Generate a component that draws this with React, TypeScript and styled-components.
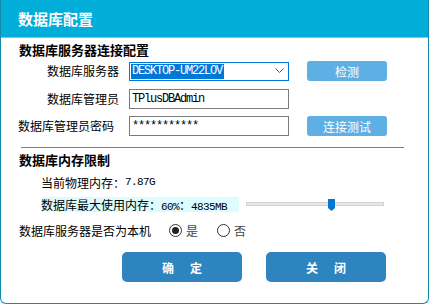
import React from 'react';
import styled, { createGlobalStyle } from 'styled-components';

const GlobalStyle = createGlobalStyle`
  body {
    margin: 0;
    background: #ffffff;
    font-family: 'Noto Sans CJK SC', 'Noto Sans', sans-serif;
  }
`;

const Window = styled.div`
  box-sizing: border-box;
  width: 429px;
  height: 304px;
  border: 1px solid #1389ab;
  border-top: none;
  border-radius: 0 0 6px 6px;
  overflow: hidden;
  background: #ffffff;
`;

const TitleBar = styled.div`
  height: 38px;
  background: #01aed9;
  border-bottom: 1px solid #74cce5;
  box-sizing: border-box;
  display: flex;
  align-items: center;
  padding-left: 17px;
  color: #ffffff;
  font-size: 15px;
  font-weight: bold;
`;

const Body = styled.div`
  display: flex;
  flex-direction: column;
`;

const SectionTitle = styled.div<{ $top: number }>`
  margin-top: ${(p) => p.$top}px;
  padding-left: 18px;
  height: 16px;
  line-height: 16px;
  font-size: 13px;
  font-weight: bold;
  color: #000;
`;

const FormGrid = styled.div`
  margin-top: 3px;
  padding-left: 17px;
  display: grid;
  grid-template-columns: 101px 160px 80px;
  grid-auto-rows: 20px;
  column-gap: 10px;
  row-gap: 7.5px;
  align-items: center;

  & > :nth-child(3n) {
    margin-left: 8px;
  }
`;

const FieldLabel = styled.div<{ $pad?: number }>`
  text-align: right;
  padding-right: ${(p) => p.$pad ?? 0}px;
  font-size: 12px;
  line-height: 20px;
  color: #000;
  white-space: nowrap;
`;

const monoText = `
  font-family: 'Liberation Mono', 'DejaVu Sans Mono', monospace;
  font-size: 12px;
  letter-spacing: -1.2px;
  color: #000;
`;

const SelectBox = styled.div`
  box-sizing: border-box;
  height: 19px;
  border: 1px solid #0078d7;
  display: flex;
  align-items: center;
  justify-content: space-between;
  padding: 0 4px 0 1px;
  background: #fff;
`;

const SelectedText = styled.span`
  ${monoText}
  color: #fff;
  background: #0078d7;
  line-height: 15px;
  padding: 0 2px 0 1px;
`;

const TextBox = styled.input`
  box-sizing: border-box;
  width: 160px;
  height: 20px;
  border: 1px solid #7a7a7a;
  padding: 0 2px;
  outline: none;
  ${monoText}
`;

const LightButton = styled.button`
  width: 80px;
  height: 20px;
  border: none;
  border-radius: 3px;
  background: #5eafe4;
  color: #ffffff;
  font-family: 'Noto Sans CJK SC', sans-serif;
  font-size: 12px;
  padding: 0;
`;

const Divider = styled.div`
  margin: 11px 0 0 20px;
  width: 383px;
  height: 1px;
  background: #1f9cc9;
`;

const MemLine = styled.div<{ $top: number }>`
  margin-top: ${(p) => p.$top}px;
  padding-left: 40px;
  height: 16px;
  display: flex;
  align-items: center;
  font-size: 12px;
  color: #000;
`;

const MemValue = styled.span`
  font-family: 'Liberation Mono', monospace;
  font-size: 11px;
  letter-spacing: -0.6px;
`;

const MaxMemLabel = styled.div`
  width: 198px;
  height: 15px;
  line-height: 15px;
  background: #dcfcff;
  white-space: nowrap;
`;

const Slider = styled.div`
  position: relative;
  margin-left: 7px;
  width: 138px;
  height: 14px;
  display: flex;
  align-items: center;
`;

const Track = styled.div`
  box-sizing: border-box;
  width: 100%;
  height: 4px;
  background: #e7e7e7;
  border: 1px solid #d2d2d2;
`;

const Thumb = styled.svg`
  position: absolute;
  top: 2px;
  margin-left: -3.5px;
`;

const RadioRow = styled.div`
  margin-top: 10px;
  padding-left: 18px;
  height: 16px;
  display: flex;
  align-items: center;
  font-size: 12px;
  color: #000;
`;

const RadioGroup = styled.div`
  margin-left: 18px;
  display: flex;
  align-items: center;
  gap: 19px;
`;

const RadioOption = styled.label`
  display: flex;
  align-items: center;
  gap: 4px;
  color: #444;
`;

const RadioCircle = styled.span<{ $checked?: boolean }>`
  box-sizing: border-box;
  width: 13px;
  height: 13px;
  border-radius: 50%;
  border: 1px solid #333;
  display: flex;
  align-items: center;
  justify-content: center;

  &::after {
    content: '';
    width: 7px;
    height: 7px;
    border-radius: 50%;
    background: ${(p) => (p.$checked ? '#222' : 'transparent')};
  }
`;

const Footer = styled.div`
  margin-top: 14px;
  padding-left: 121px;
  display: flex;
  gap: 24px;
`;

const MainButton = styled.button`
  width: 120px;
  height: 30px;
  border: none;
  border-radius: 5px;
  background: #2d84bf;
  color: #ffffff;
  font-family: 'Noto Sans CJK SC', sans-serif;
  font-size: 12px;
  font-weight: bold;
  letter-spacing: 2px;
  padding: 0 0 0 2px;
`;

const App: React.FC = () => {
  const sliderPos = 62;
  return (
    <>
      <GlobalStyle />
      <Window>
        <TitleBar>数据库配置</TitleBar>
        <Body>
          <SectionTitle $top={4}>数据库服务器连接配置</SectionTitle>
          <FormGrid>
            <FieldLabel>数据库服务器</FieldLabel>
            <SelectBox>
              <SelectedText>DESKTOP-UM22LOV</SelectedText>
              <svg width="9" height="6" viewBox="0 0 9 6">
                <polyline points="0.5,0.5 4.5,4.5 8.5,0.5" fill="none" stroke="#555" strokeWidth="1" />
              </svg>
            </SelectBox>
            <LightButton>检测</LightButton>

            <FieldLabel>数据库管理员</FieldLabel>
            <TextBox readOnly defaultValue="TPlusDBAdmin" />
            <span />

            <FieldLabel $pad={5}>数据库管理员密码</FieldLabel>
            <TextBox readOnly defaultValue="***********" />
            <LightButton>连接测试</LightButton>
          </FormGrid>

          <Divider />

          <SectionTitle $top={4}>数据库内存限制</SectionTitle>
          <MemLine $top={6}>
            当前物理内存：<MemValue>7.87G</MemValue>
          </MemLine>
          <MemLine $top={6}>
            <MaxMemLabel>
              数据库最大使用内存：<MemValue>60%</MemValue>：<MemValue>4835MB</MemValue>
            </MaxMemLabel>
            <Slider>
              <Track />
              <Thumb width="7" height="12" viewBox="0 0 7 12" style={{ left: `${sliderPos}%` }}>
                <path d="M0 0 H7 V9 L3.5 12 L0 9 Z" fill="#0078d7" />
              </Thumb>
            </Slider>
          </MemLine>

          <RadioRow>
            数据库服务器是否为本机
            <RadioGroup>
              <RadioOption>
                <RadioCircle $checked />是
              </RadioOption>
              <RadioOption>
                <RadioCircle />否
              </RadioOption>
            </RadioGroup>
          </RadioRow>

          <Footer>
            <MainButton>确　定</MainButton>
            <MainButton>关　闭</MainButton>
          </Footer>
        </Body>
      </Window>
    </>
  );
};

export default App;
